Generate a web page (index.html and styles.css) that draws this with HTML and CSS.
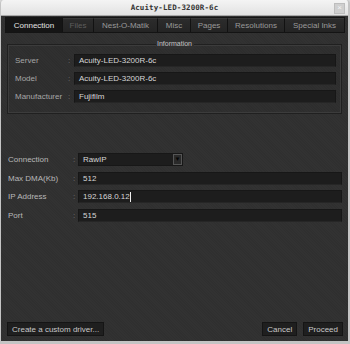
FILE: index.html
```html
<!DOCTYPE html>
<html lang="en">
<head>
    <meta charset="UTF-8">
    <title>Acuity-LED-3200R-6c</title>
    <link rel="stylesheet" href="styles.css">
</head>
<body>

<div class="window">
    <div class="titlebar">
        <span class="title">Acuity-LED-3200R-6c</span>
        <span class="close">&times;</span>
    </div>

    <div class="content">
        <div class="tabs">
            <div class="tab active">Connection</div>
            <div class="tab disabled">Files</div>
            <div class="tab">Nest-O-Matik</div>
            <div class="tab">Misc</div>
            <div class="tab">Pages</div>
            <div class="tab">Resolutions</div>
            <div class="tab">Special Inks</div>
        </div>

        <div class="group">
            <div class="legend">Information</div>
            <div class="row">
                <span class="label">Server</span><span class="colon">:</span>
                <div class="field">Acuity-LED-3200R-6c</div>
            </div>
            <div class="row">
                <span class="label">Model</span><span class="colon">:</span>
                <div class="field">Acuity-LED-3200R-6c</div>
            </div>
            <div class="row">
                <span class="label">Manufacturer</span><span class="colon">:</span>
                <div class="field">Fujifilm</div>
            </div>
        </div>

        <div class="form">
            <div class="row">
                <span class="label">Connection</span><span class="colon">:</span>
                <div class="select">
                    <span class="select-value">RawIP</span>
                    <span class="select-arrow">&#9660;</span>
                </div>
            </div>
            <div class="row">
                <span class="label">Max DMA(Kb)</span><span class="colon">:</span>
                <div class="field">512</div>
            </div>
            <div class="row">
                <span class="label">IP Address</span><span class="colon">:</span>
                <div class="field">192.168.0.12<span class="caret"></span></div>
            </div>
            <div class="row">
                <span class="label">Port</span><span class="colon">:</span>
                <div class="field">515</div>
            </div>
        </div>

        <div class="footer">
            <button class="btn">Create a custom driver...</button>
            <div class="footer-right">
                <button class="btn">Cancel</button>
                <button class="btn">Proceed</button>
            </div>
        </div>
    </div>
</div>

</body>
</html>
```

FILE: styles.css
```css
html, body {
    margin: 0;
    padding: 0;
    background-color: #d6d6d6;
}
body {
    font-family: "Liberation Sans", Arial, sans-serif;
    font-size: 8px;
}
.window {
    width: 350px;
    height: 344px;
    display: flex;
    flex-direction: column;
    box-sizing: border-box;
    border-left: 1px solid #c4c4c4;
    border-right: 2px solid #c4c4c4;
    border-bottom: 3px solid #c4c4c4;
    border-radius: 4px 4px 0 0;
    overflow: hidden;
}
.titlebar {
    height: 16px;
    flex: none;
    position: relative;
    display: flex;
    align-items: center;
    justify-content: center;
    background: linear-gradient(#f4f4f4, #e2e2e2);
    border-bottom: 1px solid #a8a8a8;
    box-sizing: border-box;
}
.title {
    font-family: "DejaVu Sans Mono", monospace;
    font-weight: bold;
    font-size: 7.5px;
    color: #333;
    letter-spacing: 0.1px;
}
.close {
    position: absolute;
    right: 3px;
    top: 3px;
    width: 9px;
    height: 9px;
    background-color: #cfcfcf;
    border: 1px solid #bdbdbd;
    color: #f4f4f4;
    font-size: 8px;
    line-height: 8px;
    text-align: center;
}
.content {
    flex: 1;
    display: flex;
    flex-direction: column;
    background-color: #323232;
    background-image: repeating-linear-gradient(45deg, rgba(0,0,0,0.05) 0 1px, transparent 1px 2px);
    padding: 1px 4px 4px 4px;
}

/* --- Tabs --- */
.tabs {
    display: flex;
    height: 14px;
    background-color: #1a1a1a;
    border: 1px solid #141414;
    width: 338px;
}
.tab {
    box-sizing: border-box;
    height: 14px;
    line-height: 13px;
    white-space: nowrap;
    text-align: center;
    color: #9a9a9a;
    background: linear-gradient(#2c2c2c, #242424);
    border-right: 1px solid #121212;
    border-top: 1px solid #383838;
}
.tab:nth-child(1) { width: 57px; }
.tab:nth-child(2) { width: 31px; }
.tab:nth-child(3) { width: 64px; }
.tab:nth-child(4) { width: 33px; }
.tab:nth-child(5) { width: 37px; }
.tab:nth-child(6) { width: 57px; }
.tab:nth-child(7) { width: 59px; border-right: none; }
.tab.active {
    background: #151515;
    color: #e4e4e4;
    border-top-color: #151515;
}
.tab.disabled {
    color: #5e5e5e;
}

/* --- Information group --- */
.group {
    position: relative;
    box-sizing: border-box;
    margin: 11px 2px 0 2px;
    height: 70px;
    border: 1px solid #202020;
    box-shadow: inset 0 0 0 1px #3c3c3c;
    background-color: rgba(0, 0, 0, 0.04);
    padding: 9px 5px 0 7px;
}
.legend {
    position: absolute;
    top: -6px;
    left: 0;
    right: 0;
    margin: 0 auto;
    width: 38px;
    text-align: center;
    background-color: #313131;
    color: #c4c4c4;
    font-size: 7px;
    line-height: 10px;
}
.row {
    display: flex;
    align-items: center;
    height: 13px;
    margin-bottom: 5px;
}
.label {
    width: 53px;
    color: #a6a6a6;
}
.colon {
    width: 6px;
    color: #777;
}
.field {
    flex: 1;
    height: 13px;
    line-height: 13px;
    box-sizing: border-box;
    padding-left: 4px;
    background-color: #1d1d1d;
    border: 1px solid #171717;
    border-bottom-color: #262626;
    color: #d6d6d6;
    display: flex;
    align-items: center;
}
.caret {
    display: inline-block;
    width: 1px;
    height: 10px;
    background-color: #eee;
}

/* --- Connection form --- */
.form {
    margin-top: 39px;
    padding: 0 2px 0 3px;
}
.form .row {
    margin-bottom: 5.5px;
}
.form .label {
    width: 65px;
    color: #b8b8b8;
}
.form .colon {
    width: 5px;
}
.select {
    width: 105px;
    height: 13px;
    box-sizing: border-box;
    display: flex;
    background-color: #1d1d1d;
    border: 1px solid #171717;
    color: #d6d6d6;
}
.select-value {
    flex: 1;
    padding-left: 4px;
    line-height: 11px;
}
.select-arrow {
    width: 9px;
    height: 11px;
    box-sizing: border-box;
    border: 1px solid #555;
    background-color: #2a2a2a;
    color: #050505;
    font-size: 6px;
    line-height: 9px;
    text-align: center;
}

/* --- Footer buttons --- */
.footer {
    margin-top: auto;
    display: flex;
    justify-content: space-between;
    align-items: center;
    padding: 0 1px 1px 2px;
}
.footer-right {
    display: flex;
    gap: 6px;
}
.btn {
    font-family: "Liberation Sans", Arial, sans-serif;
    font-size: 8px;
    height: 14px;
    padding: 0 4px;
    background-color: #1f1f1f;
    border: 1px solid #151515;
    color: #c8c8c8;
    border-radius: 0;
}
```
